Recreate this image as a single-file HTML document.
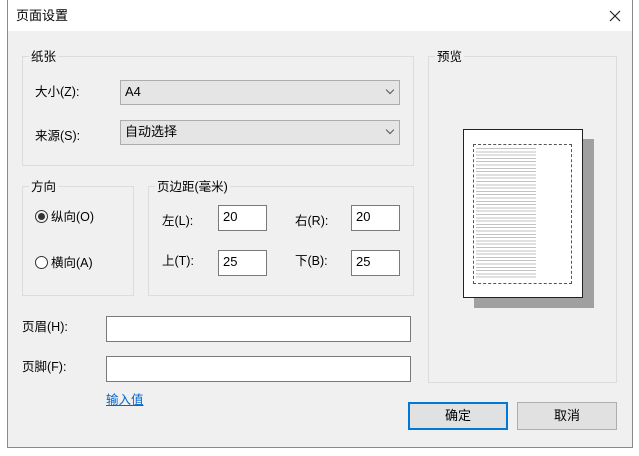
<!DOCTYPE html>
<html><head><meta charset="utf-8"><style>
*{box-sizing:border-box;margin:0;padding:0}
body{width:639px;height:456px;background:#fff;position:relative;overflow:hidden;font-family:"Liberation Sans","Microsoft YaHei","Noto Sans CJK SC",sans-serif;font-size:12px;color:#000}
.a{position:absolute}
.win{left:7px;top:-1px;width:626px;height:449px;border:1px solid #8a8a8a;background:#f0f0f0}
.title{left:0;top:0;width:624px;height:31px;background:#fff}
.grp{border:1px solid #dcdcdc}
.lbl{background:#f0f0f0;padding:0 2px;line-height:14px}
.combo{background:#e5e5e5;border:1px solid #adadad;padding-left:4px;line-height:22px;font-size:13px}
.combo:after{content:"";position:absolute;right:6px;top:6px;width:5px;height:5px;border-right:1px solid #555;border-bottom:1px solid #555;transform:rotate(45deg)}
.inp{background:#fff;border:1px solid #7a7a7a;padding:3px 0 0 4px;font-size:13px}
.btn{background:#e1e1e1;border:1px solid #adadad;text-align:center;line-height:25px;font-size:13px}
.t{line-height:16px;font-size:12.5px}
</style></head><body>
<div class="a win">
<div class="a title"></div>
</div>
<div class="a t" style="left:16px;top:8px;font-size:13px">页面设置</div>
<svg class="a" style="left:609px;top:10px" width="12" height="12"><path d="M1 1L11 11M11 1L1 11" stroke="#222" stroke-width="1.2"/></svg>

<div class="a grp" style="left:22px;top:56px;width:392px;height:110px"></div>
<div class="a lbl t" style="left:29px;top:49px">纸张</div>
<div class="a t" style="left:35px;top:84px">大小(Z):</div>
<div class="a combo" style="left:120px;top:80px;width:280px;height:25px">A4</div>
<div class="a t" style="left:35px;top:128px">来源(S):</div>
<div class="a combo" style="left:120px;top:120px;width:280px;height:25px">自动选择</div>

<div class="a grp" style="left:22px;top:186px;width:112px;height:110px"></div>
<div class="a lbl t" style="left:29px;top:179px">方向</div>
<div class="a" style="left:35px;top:210px;width:13px;height:13px;border:1px solid #333;border-radius:50%"></div>
<div class="a" style="left:38px;top:213px;width:7px;height:7px;background:#333;border-radius:50%"></div>
<div class="a t" style="left:51px;top:209px">纵向(O)</div>
<div class="a" style="left:35px;top:256px;width:13px;height:13px;border:1px solid #333;border-radius:50%;background:#fff"></div>
<div class="a t" style="left:51px;top:255px">横向(A)</div>

<div class="a grp" style="left:148px;top:186px;width:266px;height:110px"></div>
<div class="a lbl t" style="left:155px;top:179px">页边距(毫米)</div>
<div class="a t" style="left:162px;top:213px">左(L):</div>
<div class="a inp" style="left:218px;top:205px;width:49px;height:26px">20</div>
<div class="a t" style="left:295px;top:213px">右(R):</div>
<div class="a inp" style="left:351px;top:205px;width:49px;height:26px">20</div>
<div class="a t" style="left:162px;top:253px">上(T):</div>
<div class="a inp" style="left:218px;top:250px;width:49px;height:26px">25</div>
<div class="a t" style="left:295px;top:253px">下(B):</div>
<div class="a inp" style="left:351px;top:250px;width:49px;height:26px">25</div>

<div class="a t" style="left:22px;top:319px">页眉(H):</div>
<div class="a inp" style="left:106px;top:316px;width:305px;height:26px"></div>
<div class="a t" style="left:22px;top:359px">页脚(F):</div>
<div class="a inp" style="left:106px;top:356px;width:305px;height:26px"></div>
<div class="a t" style="left:106px;top:392px;color:#0066cc;text-decoration:underline">输入值</div>

<div class="a grp" style="left:428px;top:56px;width:189px;height:327px"></div>
<div class="a lbl t" style="left:435px;top:49px">预览</div>
<div class="a" style="left:474px;top:139px;width:120px;height:169px;background:#a0a0a0"></div>
<div class="a" style="left:463px;top:129px;width:120px;height:169px;background:#fff;border:1px solid #222"></div>
<div class="a" style="left:473px;top:144px;width:99px;height:140px;border:1px dashed #555"></div>
<div class="a" style="left:476px;top:147px;width:60px;height:133px;background:repeating-linear-gradient(#fff 0,#fff 1px,#999 1px,#999 2px,#fff 2px,#fff 3.3px);opacity:.6"></div>

<div class="a btn" style="left:408px;top:402px;width:100px;height:28px;border:2px solid #0078d7;line-height:24px">确定</div>
<div class="a btn" style="left:517px;top:402px;width:100px;height:28px">取消</div>
</body></html>
